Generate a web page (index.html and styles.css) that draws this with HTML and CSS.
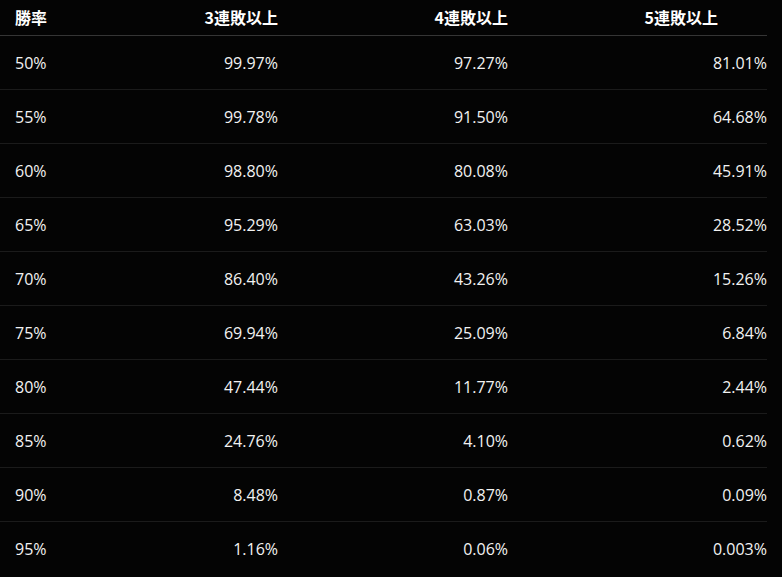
FILE: index.html
```html
<!DOCTYPE html>
<html lang="ja">
<head>
<meta charset="utf-8">
<link rel="stylesheet" href="styles.css">
</head>
<body>
<table class="stats">
  <colgroup>
    <col class="c1"><col class="c2"><col class="c3"><col class="c4">
  </colgroup>
  <thead>
    <tr><th class="left">勝率</th><th>3連敗以上</th><th>4連敗以上</th><th class="last">5連敗以上</th></tr>
  </thead>
  <tbody>
    <tr><td class="left">50%</td><td>99.97%</td><td>97.27%</td><td>81.01%</td></tr>
    <tr><td class="left">55%</td><td>99.78%</td><td>91.50%</td><td>64.68%</td></tr>
    <tr><td class="left">60%</td><td>98.80%</td><td>80.08%</td><td>45.91%</td></tr>
    <tr><td class="left">65%</td><td>95.29%</td><td>63.03%</td><td>28.52%</td></tr>
    <tr><td class="left">70%</td><td>86.40%</td><td>43.26%</td><td>15.26%</td></tr>
    <tr><td class="left">75%</td><td>69.94%</td><td>25.09%</td><td>6.84%</td></tr>
    <tr><td class="left">80%</td><td>47.44%</td><td>11.77%</td><td>2.44%</td></tr>
    <tr><td class="left">85%</td><td>24.76%</td><td>4.10%</td><td>0.62%</td></tr>
    <tr><td class="left">90%</td><td>8.48%</td><td>0.87%</td><td>0.09%</td></tr>
    <tr><td class="left">95%</td><td>1.16%</td><td>0.06%</td><td>0.003%</td></tr>
  </tbody>
</table>
</body>
</html>
```
FILE: styles.css
```css
html, body {
  margin: 0;
  background: #040404;
  height: 100%;
}
body {
  font-family: "Open Sans", "Noto Sans", "Noto Sans CJK JP", sans-serif;
  color: #f2f2f2;
  font-size: 16px;
}
.stats {
  border-collapse: collapse;
  table-layout: fixed;
  width: 767px;
}
.c1 { width: 100px; }
.c2 { width: 178px; }
.c3 { width: 230px; }
.c4 { width: 259px; }
.stats th, .stats td {
  text-align: right;
  padding: 0;
  white-space: nowrap;
}
.stats th {
  font-family: "Noto Sans CJK JP", sans-serif;
  font-weight: 700;
  color: #ffffff;
  height: 35px;
  line-height: 35px;
  border-bottom: 1px solid #353535;
}
.stats th.last {
  padding-right: 49px;
}
.stats td {
  box-sizing: border-box;
  height: 54px;
  padding-top: 1px;
  line-height: 52px;
  border-bottom: 1px solid #1b1b1b;
}
.stats tbody tr:last-child td {
  border-bottom: none;
}
.stats .left {
  text-align: left;
  padding-left: 15px;
}
```
